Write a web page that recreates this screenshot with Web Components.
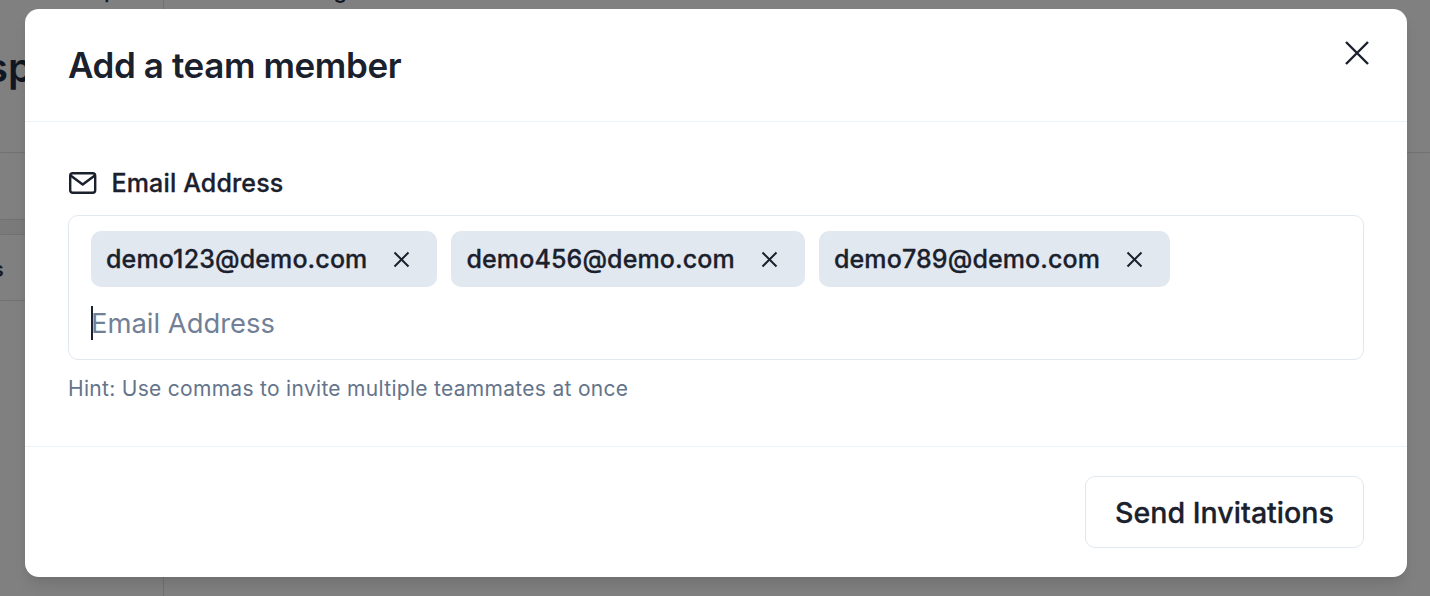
<!DOCTYPE html>
<html><head><meta charset="utf-8"><style>
html,body{margin:0;padding:0;height:100%;overflow:hidden;background:#808080}
body{font-family:Inter,"Liberation Sans",sans-serif}
</style></head><body>
<team-page>
  <add-member-modal title-text="Add a team member">
    <field-label>Email Address</field-label>
    <email-box>
      <email-chip>demo123@demo.com</email-chip>
      <email-chip>demo456@demo.com</email-chip>
      <email-chip>demo789@demo.com</email-chip>
    </email-box>
    <span slot="hint">Hint: Use commas to invite multiple teammates at once</span>
    <send-button slot="footer">Send Invitations</send-button>
  </add-member-modal>
</team-page>
<script>
function def(name,html){customElements.define(name,class extends HTMLElement{constructor(){super();this.attachShadow({mode:'open'}).innerHTML=html(this)}})}
def('team-page',()=>`<style>
:host{display:block;position:relative;width:1430px;height:596px;overflow:hidden;background:#808080;color:#1a202c}
.top{height:0;display:flex;padding-left:104px;gap:216px;font-size:22px;line-height:24px;font-weight:500;color:#111722}
.top span{display:block;margin-top:-22px;height:24px}
.bg{display:flex;height:100%}
.side{width:163px;border-right:1px solid #727272;display:flex;flex-direction:column}
.main{flex:1}
.head{height:152px;border-bottom:1px solid #727272;overflow:hidden}
.word{font-size:40px;font-weight:600;line-height:48px;padding-top:44px;margin-left:-14px;color:#111722}
.r1{height:66px;border-bottom:1px solid #727272}
.r2{height:14px;background:#7a7a7a;border-bottom:1px solid #727272}
.r3{height:65px;border-bottom:1px solid #727272;font-size:22px;font-weight:500;line-height:68px;margin-left:-8px;color:#111722;overflow:hidden}
.mhead{height:152px;border-bottom:1px solid #727272}
.scrim{position:absolute;inset:0;display:flex;align-items:flex-start;padding:9px 0 0 25px;box-sizing:border-box}
</style><div class="top"><span>p</span><span>g</span></div><div class="bg"><div class="side"><div class="head"><div class="word">sp</div></div><div class="r1"></div><div class="r2"></div><div class="r3">s</div></div><div class="main"><div class="mhead"></div></div></div><div class="scrim"><slot></slot></div>`);
def('add-member-modal',h=>`<style>
:host{display:block;width:1382px;height:568px;background:#fff;border-radius:14px;flex:none;box-shadow:0 10px 15px -3px rgba(0,0,0,.1),0 4px 6px -2px rgba(0,0,0,.05)}
header{height:113px;box-sizing:border-box;border-bottom:1px solid #edf2f7;display:flex;justify-content:space-between;padding:0 37px 0 43px}
h2{margin:0;font-size:35px;line-height:48px;font-weight:600;padding-top:32px;color:#1a202c;letter-spacing:-.4px}
svg{display:block;margin-top:31px}
main{height:325px;box-sizing:border-box;padding:44px 43px 0;border-bottom:1px solid #edf2f7}
.hint{font-size:21px;line-height:30px;color:#64748b;margin-top:14px;letter-spacing:.3px}
footer{display:flex;justify-content:flex-end;padding:29px 43px 0}
</style><header><h2>${h.getAttribute('title-text')}</h2><svg width="26" height="26" viewBox="0 0 26 26" fill="none" stroke="#1a202c" stroke-width="2.4"><path d="M2 2 24 24M24 2 2 24"/></svg></header><main><slot></slot><div class="hint"><slot name="hint"></slot></div></main><footer><slot name="footer"></slot></footer>`);
def('field-label',()=>`<style>
:host{display:flex;align-items:center;gap:14.5px;font-size:25px;line-height:34px;font-weight:500;-webkit-text-stroke:.3px #1a202c;letter-spacing:.15px;color:#1a202c;margin-bottom:15px}
svg{display:block;flex:none}
</style><svg width="29" height="22" viewBox="0 0 29 22" fill="none" stroke="#1a202c" stroke-width="2.4" stroke-linejoin="round"><rect x="2.2" y="1.2" width="25" height="19.6" rx="2.5"/><path d="M2.6 3.5 14.7 12.5 26.8 3.5"/></svg><slot></slot>`);
def('email-box',()=>`<style>
:host{display:block;box-sizing:border-box;height:145px;border:1px solid #e2e8f0;border-radius:10px;padding:15px 22px 0}
.chips{display:flex;gap:14px}
.input{display:flex;align-items:center;height:34px;margin-top:19px;font-size:27.4px;color:#718096;line-height:34px}
.caret{width:2px;height:34px;background:#1a202c;margin-right:-2px;flex:none}
</style><div class="chips"><slot></slot></div><div class="input"><span class="caret"></span><span>Email Address</span></div>`);
def('email-chip',()=>`<style>
:host{display:flex;align-items:center;height:56px;box-sizing:border-box;background:#e2e8f0;border-radius:10px;padding:0 27px 0 15px;font-size:25px;font-weight:500;-webkit-text-stroke:.3px #1a202c;letter-spacing:.13px;color:#1a202c}
svg{display:block;margin-left:26px}
</style><slot></slot><svg width="17" height="17" viewBox="0 0 17 17" fill="none" stroke="#1a202c" stroke-width="2"><path d="M1.5 1.5 15.5 15.5M15.5 1.5 1.5 15.5"/></svg>`);
def('send-button',()=>`<style>
:host{display:flex;align-items:center;justify-content:center;width:279px;height:72px;box-sizing:border-box;border:1px solid #e2e8f0;border-radius:10px;font-size:28.6px;font-weight:500;-webkit-text-stroke:.3px #1a202c;color:#1a202c;background:#fff;padding-top:1px}
</style><slot></slot>`);
</script>
</body></html>
